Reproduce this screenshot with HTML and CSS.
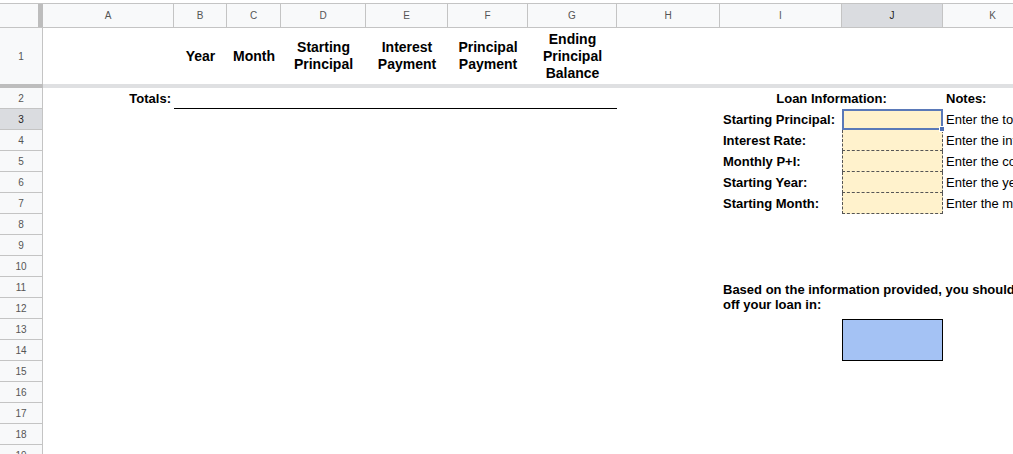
FILE: index.html
```html
<!DOCTYPE html>
<html>
<head>
<meta charset="utf-8">
<title>Loan Calculator</title>
<link rel="stylesheet" href="styles.css">
</head>
<body>
<div class="sheet">
  <div class="colheads">
    <div class="corner"></div>
    <div class="ch">A</div>
    <div class="ch">B</div>
    <div class="ch">C</div>
    <div class="ch">D</div>
    <div class="ch">E</div>
    <div class="ch">F</div>
    <div class="ch">G</div>
    <div class="ch">H</div>
    <div class="ch">I</div>
    <div class="ch ch-sel">J</div>
    <div class="ch">K</div>
  </div>
  <div class="body">
    <div class="rowheads">
      <div class="rh rh-tall">1</div>
      <div class="rh-bar"></div>
      <div class="rh">2</div>
      <div class="rh rh-sel">3</div>
      <div class="rh">4</div>
      <div class="rh">5</div>
      <div class="rh">6</div>
      <div class="rh">7</div>
      <div class="rh">8</div>
      <div class="rh">9</div>
      <div class="rh">10</div>
      <div class="rh">11</div>
      <div class="rh">12</div>
      <div class="rh">13</div>
      <div class="rh">14</div>
      <div class="rh">15</div>
      <div class="rh">16</div>
      <div class="rh">17</div>
      <div class="rh">18</div>
      <div class="rh">19</div>
    </div>
    <div class="cells">
      <div class="cell th col-b row-1">Year</div>
      <div class="cell th col-c row-1">Month</div>
      <div class="cell th col-d row-1">Starting<br>Principal</div>
      <div class="cell th col-e row-1">Interest<br>Payment</div>
      <div class="cell th col-f row-1">Principal<br>Payment</div>
      <div class="cell th col-g row-1">Ending<br>Principal<br>Balance</div>

      <div class="bar"></div>

      <div class="cell bold right col-a row-2">Totals:</div>
      <div class="cell totals-line row-2"></div>

      <div class="cell bold center loan-info row-2">Loan Information:</div>
      <div class="cell bold col-k row-2">Notes:</div>

      <div class="cell bold col-i row-3">Starting Principal:</div>
      <div class="input selected col-j row-3"><span class="handle"></span></div>
      <div class="cell col-k row-3">Enter the total amount of your loan</div>

      <div class="cell bold col-i row-4">Interest Rate:</div>
      <div class="input col-j row-4"></div>
      <div class="cell col-k row-4">Enter the interest rate of your loan</div>

      <div class="cell bold col-i row-5">Monthly P+I:</div>
      <div class="input col-j row-5"></div>
      <div class="cell col-k row-5">Enter the combined monthly payment</div>

      <div class="cell bold col-i row-6">Starting Year:</div>
      <div class="input col-j row-6"></div>
      <div class="cell col-k row-6">Enter the year your loan started</div>

      <div class="cell bold col-i row-7">Starting Month:</div>
      <div class="input col-j row-7"></div>
      <div class="cell col-k row-7">Enter the month your loan started</div>

      <div class="result-text">Based on the information provided, you should pay<br>off your loan in:</div>
      <div class="result-box"></div>
    </div>
  </div>
</div>
</body>
</html>
```
FILE: styles.css
```css
* { box-sizing: border-box; }
html, body { margin: 0; padding: 0; }
body {
  background: #fff;
  font-family: "Liberation Sans", Arial, sans-serif;
  color: #000;
  width: 1013px;
  height: 454px;
  overflow: hidden;
}
.sheet {
  padding-top: 3px;
  width: 1043px;
}
.colheads {
  display: grid;
  grid-template-columns: 43px 131px 53px 54px 85px 82px 80px 89px 103px 122px 101px 100px;
  height: 25px;
  border-top: 1px solid #c4c4c4;
  border-bottom: 1px solid #c4c4c4;
  background: #f8f9fa;
}
.corner {
  border-right: 5px solid #bdbdbd;
}
.ch {
  border-right: 1px solid #c4c4c4;
  display: flex;
  align-items: center;
  justify-content: center;
  font-size: 10px;
  color: #555;
}
.ch-sel {
  background: #dadce0;
  color: #222;
}
.body {
  display: flex;
}
.rowheads {
  width: 43px;
  flex: none;
  display: flex;
  flex-direction: column;
}
.rh {
  height: 21px;
  background: #f8f9fa;
  border-right: 1px solid #c4c4c4;
  border-bottom: 1px solid #c4c4c4;
  display: flex;
  align-items: center;
  justify-content: center;
  font-size: 10px;
  color: #555;
}
.rh-tall { height: 56px; border-bottom: none; }
.rh-sel { background: #dadce0; color: #222; }
.rh-bar { height: 4px; background: #bdbdbd; }

.cells {
  display: grid;
  grid-template-columns: 131px 53px 54px 85px 82px 80px 89px 103px 122px 101px 100px;
  grid-template-rows: 56px 4px repeat(18, 21px);
}
.bar {
  grid-column: 1 / -1;
  grid-row: 2;
  background: #dfe0e2;
}
.cell {
  display: flex;
  align-items: center;
  padding: 0 3px;
  font-size: 13px;
  white-space: nowrap;
  overflow: visible;
}
.th {
  font-weight: bold;
  font-size: 14px;
  line-height: 17px;
  justify-content: center;
  text-align: center;
}
.bold { font-weight: bold; }
.right { justify-content: flex-end; }
.center { justify-content: center; }

.col-a { grid-column: 1; }
.col-b { grid-column: 2; }
.col-c { grid-column: 3; }
.col-d { grid-column: 4; }
.col-e { grid-column: 5; }
.col-f { grid-column: 6; }
.col-g { grid-column: 7; }
.col-h { grid-column: 8; }
.col-i { grid-column: 9; }
.col-j { grid-column: 10; }
.col-k { grid-column: 11; }

.row-1 { grid-row: 1; }
.row-2 { grid-row: 3; }
.row-3 { grid-row: 4; }
.row-4 { grid-row: 5; }
.row-5 { grid-row: 6; }
.row-6 { grid-row: 7; }
.row-7 { grid-row: 8; }

.totals-line {
  grid-column: 2 / span 6;
  border-bottom: 1px solid #000;
}
.loan-info {
  grid-column: 9 / span 2;
}
.input {
  background: #fff2cc;
  border-left: 1px dashed #555;
  border-right: 1px dashed #555;
  border-bottom: 1px dashed #555;
}
.selected {
  position: relative;
  border: 2px solid #5a79b8;
}
.handle {
  position: absolute;
  right: -4px;
  bottom: -4px;
  width: 6px;
  height: 6px;
  background: #4d6fb4;
  border: 1px solid #fff;
}
.result-text {
  grid-column: 9 / span 3;
  grid-row: 12 / span 2;
  padding: 5px 3px 0;
  font-size: 13px;
  font-weight: bold;
  line-height: 15px;
  white-space: nowrap;
}
.result-box {
  grid-column: 10;
  grid-row: 14 / span 2;
  background: #a4c2f4;
  border: 1px solid #000;
}
```
